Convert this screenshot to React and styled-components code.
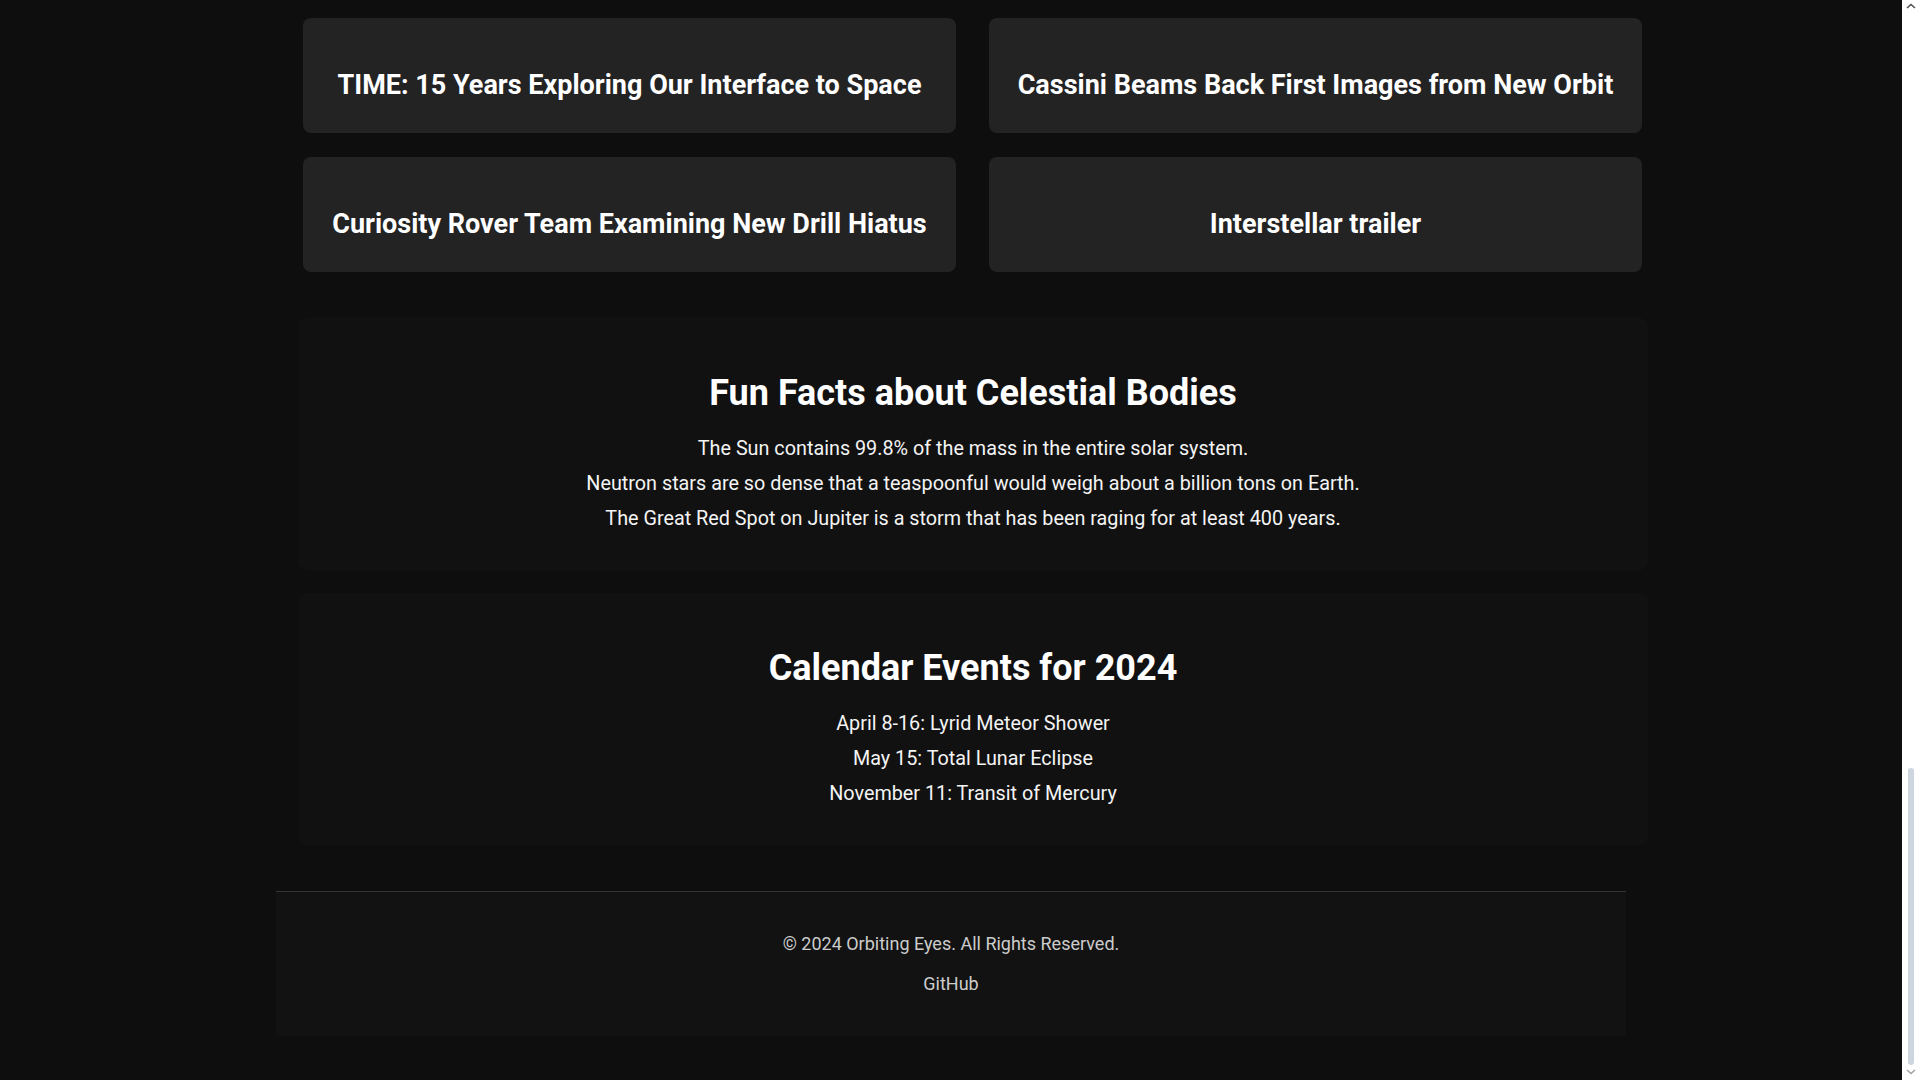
import React from 'react'
import styled, { createGlobalStyle } from 'styled-components'

const news = [
  'TIME: 15 Years Exploring Our Interface to Space',
  'Cassini Beams Back First Images from New Orbit',
  'Curiosity Rover Team Examining New Drill Hiatus',
  'Interstellar trailer',
]

const facts = [
  'The Sun contains 99.8% of the mass in the entire solar system.',
  'Neutron stars are so dense that a teaspoonful would weigh about a billion tons on Earth.',
  'The Great Red Spot on Jupiter is a storm that has been raging for at least 400 years.',
]

const events = [
  'April 8-16: Lyrid Meteor Shower',
  'May 15: Total Lunar Eclipse',
  'November 11: Transit of Mercury',
]

const Chevron = ({ up, color }) => (
  <svg width="10" height="6" viewBox="0 0 10 6">
    <polyline
      points={up ? '1,5 5,1.5 9,5' : '1,1 5,4.5 9,1'}
      fill="none"
      stroke={color}
      strokeWidth="1.6"
    />
  </svg>
)

export default function App() {
  return (
    <Screen>
      <GlobalStyle />
      <Viewport>
        <Page>
          <Main>
            <NewsGrid>
              {news.map((title) => (
                <NewsCard key={title}>
                  <NewsTitle>{title}</NewsTitle>
                </NewsCard>
              ))}
            </NewsGrid>
            <InfoSection>
              <SectionTitle>Fun Facts about Celestial Bodies</SectionTitle>
              <InfoList>
                {facts.map((f) => (
                  <InfoItem key={f}>{f}</InfoItem>
                ))}
              </InfoList>
            </InfoSection>
            <InfoSection>
              <SectionTitle>Calendar Events for 2024</SectionTitle>
              <InfoList>
                {events.map((e) => (
                  <InfoItem key={e}>{e}</InfoItem>
                ))}
              </InfoList>
            </InfoSection>
          </Main>
          <Footer>
            <FooterText>&copy; 2024 Orbiting Eyes. All Rights Reserved.</FooterText>
            <FooterText>
              <FooterLink href="#">GitHub</FooterLink>
            </FooterText>
          </Footer>
        </Page>
      </Viewport>
      <ScrollRail>
        <Chevron up color="#505050" />
        <ScrollThumb />
        <Chevron color="#a3a3a3" />
      </ScrollRail>
    </Screen>
  )
}

const GlobalStyle = createGlobalStyle`
  body {
    margin: 0;
    background: #0e0e0e;
    color: #fff;
    font-family: Roboto, 'Liberation Sans', sans-serif;
  }
`

const Screen = styled.div`
  display: flex;
  height: 1080px;
  overflow: hidden;
`

const Viewport = styled.div`
  flex: 1;
`

const ScrollRail = styled.div`
  width: 18px;
  background: #ffffff;
  display: flex;
  flex-direction: column;
  align-items: center;
  padding: 3px 0 5px;
  box-sizing: border-box;

  svg:last-child {
    margin-top: 4px;
  }
`

const ScrollThumb = styled.div`
  margin-top: auto;
  width: 6px;
  height: 297px;
  border-radius: 3px;
  background: #cdd6de;
`

const Page = styled.div`
  width: 1350px;
  margin: 0 auto;
  padding: 18px 0 45px;
`

const Main = styled.main`
  margin: 0 -22px 0 22px;
  display: flex;
  flex-direction: column;
`

const NewsGrid = styled.div`
  display: grid;
  grid-template-columns: 1fr 1fr;
  column-gap: 33px;
  row-gap: 24px;
  margin: 0 6px 23px 5px;
`

const NewsCard = styled.article`
  box-sizing: border-box;
  height: 115px;
  padding: 51px 16px 32px;
  background: #232323;
  border-radius: 8px;
  text-align: center;
`

const NewsTitle = styled.h3`
  margin: 0;
  font-size: 27px;
  line-height: 32px;
  font-weight: 700;
  color: #fff;
  white-space: nowrap;
`

const InfoSection = styled.section`
  margin-top: 23px;
  padding: 54px 32px 34px;
  background: #111111;
  border-radius: 8px;
  text-align: center;
`

const SectionTitle = styled.h2`
  margin: 0 0 17px;
  font-size: 36px;
  line-height: 42px;
  font-weight: 700;
`

const InfoList = styled.ul`
  list-style: none;
  margin: 0;
  padding: 0;
`

const InfoItem = styled.li`
  font-size: 19.8px;
  line-height: 35px;
  color: #f4f4f4;
`

const Footer = styled.footer`
  margin-top: 46px;
  padding: 24px;
  background: #121212;
  border-top: 1px solid #333;
  text-align: center;
`

const FooterText = styled.p`
  margin: 16px 0;
  font-size: 18px;
  line-height: 24px;
  color: #cccccc;
`

const FooterLink = styled.a`
  color: #cccccc;
  text-decoration: none;
`
